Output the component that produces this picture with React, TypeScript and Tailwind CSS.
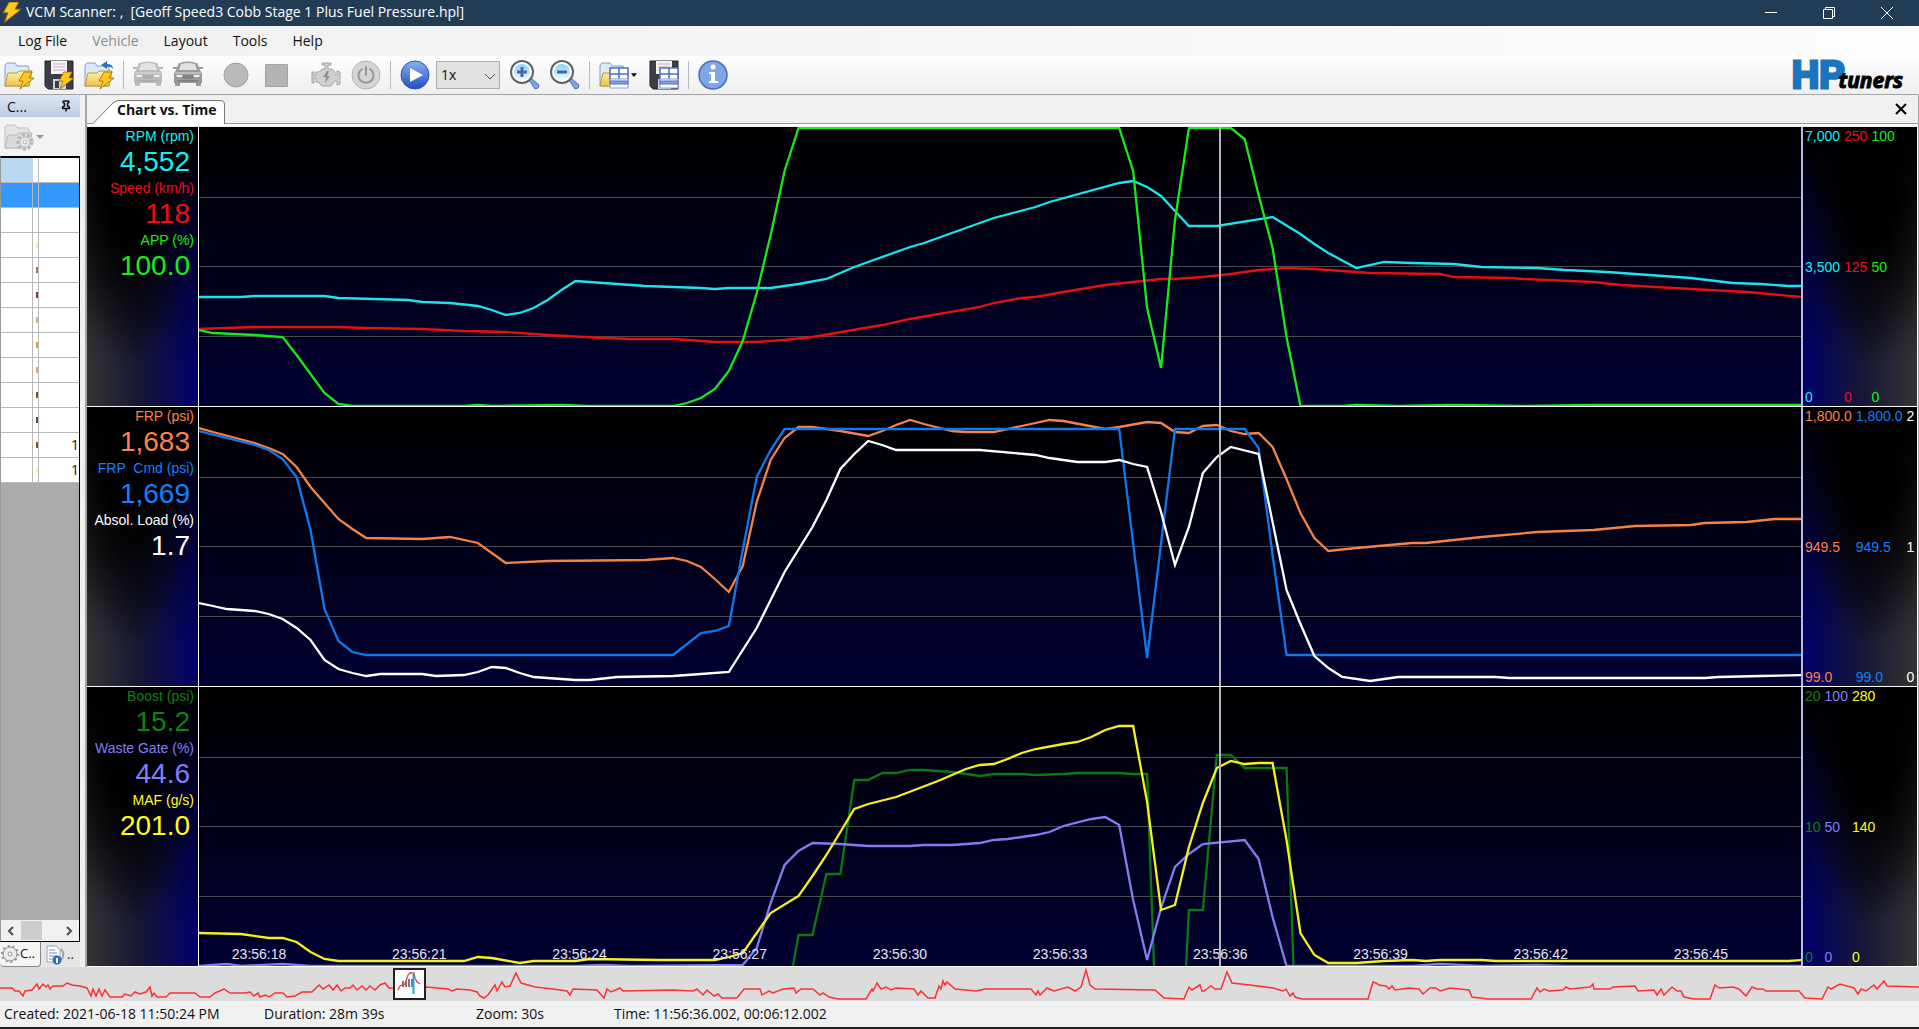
import React from "react";
import { Pin } from "lucide-react";

type Point = [number, number];

type Channel = {
  name: string;
  value: string;
  text: string;
  stroke: string;
  scale: string[];
  lines: Point[][];
};

// Width of a plot, in samples, and height of a plot
const SAMPLES = 115;
const PLOT_HEIGHT = 279;
const CURSOR = 73.2;

function toPoints(line: Point[]) {
  return line.map(([x, y]) => `${x * 10},${y}`).join(" ");
}

function Bolt({ x = 0, y = 0, size = 1 }: { x?: number; y?: number; size?: number }) {
  return (
    <path
      d="M6 0h8l-3 6h5L2 17l3-8H1z"
      transform={`translate(${x} ${y}) scale(${size})`}
      fill="#ffc81e"
      stroke="#9a6a10"
      strokeWidth="0.8"
      strokeLinejoin="round"
    />
  );
}

function FolderShape({ gray = false }: { gray?: boolean }) {
  return (
    <>
      <path
        d="M1 26V5l2-2h8l2 3h11l1 2v18z"
        fill={gray ? "#e4e4e4" : "#d9ebf7"}
        stroke={gray ? "#bdbdbd" : "#7aa5c9"}
      />
      <path
        d="M1 26l3-13h9l2-2h13l-3 15z"
        fill={gray ? "#dadada" : "url(#folder)"}
        stroke={gray ? "#b9b9b9" : "#c9962c"}
      />
    </>
  );
}

function FloppyShape() {
  return (
    <>
      <path d="M1 1h28v28H4l-3-3z" fill="#3d3d46" stroke="#26262c" />
      <path d="M7 1h16v13H7z" fill="#f6f2f3" />
      <path d="M9 4h12M9 7h12M9 10h12" stroke="#c9b3b8" />
      <path d="M9 19h13v10H9z" fill="#cfd2d8" />
      <path d="M11 21h4v7h-4z" fill="#3d3d46" />
    </>
  );
}

function TableShape() {
  return (
    <>
      <path d="M11 8h18v12H11z" fill="#fff" stroke="#4a6fc0" strokeWidth="1.5" />
      <path d="M11 14h18M20 8v12" stroke="#4a6fc0" strokeWidth="1.5" />
      <path d="M11 19h18v9H11z" fill="#fff" stroke="#8aa0c8" />
      <path d="M11 21h18v3H11z" fill="#7fa6ee" stroke="#4a6fc0" />
    </>
  );
}

function Car({ dark = false }: { dark?: boolean }) {
  const color = dark ? "#9a9a9a" : "#bcbcbc";
  return (
    <svg viewBox="0 0 30 30" className="size-[30px]">
      <path
        d="M6 3q9-3 18 0l3 7 2 3v10h-1v3h-5v-3H7v3H2v-3H1V13l2-3z"
        fill={color}
      />
      <path d="M8 4q7-2 14 0l2 6H6z" fill="#e2e2e2" />
      <path d="M0 8h4M26 8h4" stroke={color} strokeWidth="2" />
      <path d="M2 13h26" stroke="#dedede" />
      <path d="M3 15h6v2H4zM27 15h-6v2h5z" fill="#f1f1f1" />
      <path d="M10 16h10M10 18h10M4 21h22" stroke={dark ? "#6a6a6a" : "#a0a0a0"} />
    </svg>
  );
}

function Magnifier({ plus = false }: { plus?: boolean }) {
  return (
    <svg viewBox="0 0 30 30" className="size-[30px]">
      <path d="M19 20l2-2 8 7q0 4-4 4z" fill="#7ea7ea" stroke="#4e70b4" />
      <circle cx="12" cy="12" r="11" fill="#fff" stroke="#5f6266" strokeWidth="2" />
      <circle cx="12" cy="12" r="8" fill="url(#lens)" />
      <path
        d={plus ? "M7 12h10M12 7v10" : "M7 12h10"}
        stroke="#4468b0"
        strokeWidth="3"
      />
    </svg>
  );
}

function Gear({ className }: { className: string }) {
  return (
    <svg viewBox="0 0 20 20" className={className}>
      <circle cx="10" cy="10" r="7" fill="#ececec" stroke="#8f8f8f" />
      <circle
        cx="10"
        cy="10"
        r="8"
        fill="none"
        stroke="#8f8f8f"
        strokeWidth="2"
        strokeDasharray="2 3"
      />
      <circle cx="10" cy="10" r="2" fill="#fff" stroke="#8f8f8f" />
    </svg>
  );
}

function ToolButton({
  label,
  className = "",
  children,
}: {
  label: string;
  className?: string;
  children: React.ReactNode;
}) {
  return (
    <button type="button" aria-label={label} className={`flex shrink-0 items-center ${className}`}>
      {children}
    </button>
  );
}

function Separator() {
  return <div className="-mx-px h-7 w-px shrink-0 bg-[#b9b9b9]" />;
}

function TitleBar() {
  return (
    <header className="flex h-[26px] shrink-0 items-center bg-[#233c56] pr-[3px] text-white">
      <svg viewBox="0 0 22 22" className="ml-px size-[22px]">
        <Bolt x={1} y={0} size={1.2} />
      </svg>
      <h1 className="ml-[3px] flex-1 whitespace-pre pb-0.5 text-[14px] leading-6">
        VCM Scanner: ,  [Geoff Speed3 Cobb Stage 1 Plus Fuel Pressure.hpl]
      </h1>
      <button type="button" aria-label="Minimize" className="flex w-[58px] justify-center">
        <svg viewBox="0 0 12 12" className="size-3" fill="none" stroke="currentColor">
          <path d="M0 5.5h12" />
        </svg>
      </button>
      <button type="button" aria-label="Restore" className="flex w-[58px] justify-center">
        <svg viewBox="0 0 12 12" className="size-3" fill="none" stroke="currentColor">
          <path d="M.5 2.5h9v9h-9zM2.500 2.500v-2h9v9h-2" />
        </svg>
      </button>
      <button type="button" aria-label="Close" className="flex w-[58px] justify-center">
        <svg viewBox="0 0 12 12" className="size-3" fill="none" stroke="currentColor">
          <path d="M0 0l12 12M12 0L0 12" />
        </svg>
      </button>
    </header>
  );
}

function MenuBar() {
  return (
    <nav className="flex h-[30px] shrink-0 items-center gap-[25px] bg-linear-to-r from-[#f0f0f0] to-[#fdfdfd] px-[18px] pb-0.5 text-[14px]">
      <button type="button">Log File</button>
      <button type="button" disabled className="text-[#8d8d8d]">
        Vehicle
      </button>
      <button type="button">Layout</button>
      <button type="button">Tools</button>
      <button type="button">Help</button>
    </nav>
  );
}

function Toolbar() {
  return (
    <div className="flex h-[39px] shrink-0 items-center gap-[10px] border-b border-[#a5a5a5] bg-linear-to-b from-[#fdfdfd] to-[#efefef] pl-1 pr-4">
      <ToolButton label="Open log file">
        <svg viewBox="0 0 30 30" className="size-[30px]">
          <defs>
            <linearGradient id="folder" x1="0" y1="0" x2="0" y2="1">
              <stop offset="0" stopColor="#fff0ae" />
              <stop offset="1" stopColor="#f2c14b" />
            </linearGradient>
            <linearGradient id="lens" x1="0" y1="0" x2="0" y2="1">
              <stop offset="0" stopColor="#8ad3f3" />
              <stop offset="1" stopColor="#f2fbff" />
            </linearGradient>
            <linearGradient id="play" x1="0" y1="0" x2="0" y2="1">
              <stop offset="0" stopColor="#8ab0f0" />
              <stop offset="1" stopColor="#1e50c0" />
            </linearGradient>
          </defs>
          <FolderShape />
          <Bolt x={14} y={12} />
        </svg>
      </ToolButton>
      <ToolButton label="Save log file">
        <svg viewBox="0 0 30 30" className="size-[30px]">
          <FloppyShape />
          <Bolt x={14} y={12} />
        </svg>
      </ToolButton>
      <ToolButton label="Reopen log file">
        <svg viewBox="0 0 30 30" className="size-[30px]">
          <FolderShape />
          <path d="M29 9q0-5-6-5V1l-6 4 6 4V7q4-1 6 2z" fill="#2b73b5" />
          <Bolt x={14} y={12} />
        </svg>
      </ToolButton>
      <Separator />
      <ToolButton label="Connect vehicle">
        <Car />
      </ToolButton>
      <ToolButton label="Disconnect vehicle">
        <Car dark />
      </ToolButton>
      <ToolButton label="Record" className="ml-2">
        <svg viewBox="0 0 30 30" className="size-[30px]">
          <circle cx="15" cy="15" r="12" fill="#b9b9b9" stroke="#9f9f9f" />
        </svg>
      </ToolButton>
      <ToolButton label="Stop">
        <svg viewBox="0 0 30 30" className="size-[30px]">
          <path d="M4.500 4.500h22v22h-22z" fill="#b4b4b4" stroke="#a3a3a3" />
        </svg>
      </ToolButton>
      <ToolButton label="Trouble codes" className="ml-[10px]">
        <svg viewBox="0 0 30 30" className="size-[30px]">
          <path
            d="M11 3h9v2h-3v4h4l3 3v3h2v-4l3 1v12l-3 1v-4h-2l-4 5H11l-4-4H5v-4H3v5H1V12h2v3h2v-3h3l3-3h3V5h-3z"
            fill="#cfcfcf"
            stroke="#a6a6a6"
          />
          <path d="M16 11l-4 6h3l-1 6 5-7h-3l2-5z" fill="#8f8f8f" />
        </svg>
      </ToolButton>
      <ToolButton label="Power">
        <svg viewBox="0 0 30 30" className="size-[30px]" fill="none">
          <circle cx="15" cy="15" r="14" fill="#d5d5d5" stroke="#b4b4b4" />
          <path
            d="M11 9a7.500 7.500 0 1 0 8 0M15 7v8"
            stroke="#969696"
            strokeWidth="2"
            strokeLinecap="round"
          />
        </svg>
      </ToolButton>
      <Separator />
      <ToolButton label="Play">
        <svg viewBox="0 0 30 30" className="size-[30px]">
          <circle cx="15" cy="15" r="14" fill="url(#play)" stroke="#2a55ae" />
          <path d="M10 8l13 7-13 7z" fill="#fff" />
        </svg>
      </ToolButton>
      <div className="relative -ml-1 shrink-0">
        <select
          aria-label="Playback speed"
          className="h-7 w-16 appearance-none border border-[#adadad] bg-[#e1e1e1] px-1 text-[14px] leading-5"
        >
          <option>1x</option>
        </select>
        <svg
          viewBox="0 0 12 7"
          className="pointer-events-none absolute right-1 top-3 h-[7px] w-3"
          fill="none"
          stroke="#555"
        >
          <path d="M1 1l5 5 5-5" />
        </svg>
      </div>
      <ToolButton label="Zoom in">
        <Magnifier plus />
      </ToolButton>
      <ToolButton label="Zoom out">
        <Magnifier />
      </ToolButton>
      <Separator />
      <ToolButton label="Open layout">
        <svg viewBox="0 0 30 30" className="size-[30px]">
          <FolderShape />
          <TableShape />
        </svg>
        <svg viewBox="0 0 8 5" className="ml-0.5 h-1 w-1.5">
          <path d="M0 0h8L4 5z" />
        </svg>
      </ToolButton>
      <ToolButton label="Save layout" className="ml-0.5">
        <svg viewBox="0 0 30 30" className="size-[30px]">
          <FloppyShape />
          <TableShape />
        </svg>
      </ToolButton>
      <Separator />
      <ToolButton label="Information">
        <svg viewBox="0 0 30 30" className="size-[30px]">
          <circle cx="15" cy="15" r="14" fill="#7fa5ea" stroke="#4a6cb3" strokeWidth="1.500" />
          <path d="M11 12h6v9h3v2h-9v-2h2v-7h-2z" fill="#fff" />
          <circle cx="15" cy="7" r="2.500" fill="#fff" />
        </svg>
      </ToolButton>
      <div className="ml-auto flex items-baseline font-bold">
        <span className="font-['Liberation_Sans'] text-[38px] leading-9 text-[#1c75bc] [-webkit-text-stroke:3px_#1c75bc]">
          HP
        </span>
        <span className="relative -ml-1.5 text-[21px] italic leading-6 text-black [-webkit-text-stroke:1px_#000]">
          tuners
        </span>
      </div>
    </div>
  );
}

const rows = [
  { mark: "", value: "", selected: true },
  { mark: "", value: "" },
  { mark: "bg-[#f4f7a8]", value: "" },
  { mark: "bg-[#b07040]", value: "" },
  { mark: "bg-[#7a3550]", value: "" },
  { mark: "bg-[#e0b060]", value: "" },
  { mark: "bg-[#e0a040]", value: "" },
  { mark: "bg-[#e0a860]", value: "" },
  { mark: "bg-[#8a5020]", value: "" },
  { mark: "bg-[#7a3570]", value: "" },
  { mark: "bg-[#8a5020]", value: "1" },
  { mark: "bg-[#f4f7a8]", value: "1" },
];

function Sidebar() {
  return (
    <aside className="flex w-20 shrink-0 flex-col overflow-hidden text-[13px]">
      <div className="flex h-[22px] shrink-0 items-center justify-between bg-linear-to-b from-[#dbe6f2] to-[#bccde0] pl-[7px] pr-2 text-[14px]">
        <span>C...</span>
        <button type="button" aria-label="Pin panel">
          <Pin className="size-3" strokeWidth={3} />
        </button>
      </div>
      <div className="flex h-[39px] shrink-0 items-center bg-[#f3f3f3] pl-1">
        <button type="button" aria-label="Channel options" className="flex items-center gap-0.5">
          <svg viewBox="0 0 30 30" className="size-[30px]">
            <FolderShape gray />
            <circle cx="21" cy="20" r="7" fill="#e6e6e6" stroke="#b5b5b5" strokeWidth="3" strokeDasharray="3 2" />
            <circle cx="21" cy="20" r="5" fill="#ededed" stroke="#b5b5b5" />
            <circle cx="21" cy="20" r="2" fill="#f8f8f8" stroke="#b5b5b5" />
          </svg>
          <svg viewBox="0 0 8 4" className="h-1 w-2" fill="#999">
            <path d="M0 0h8L4 4z" />
          </svg>
        </button>
      </div>
      <div className="flex min-h-0 flex-1 flex-col border border-t-2 border-black border-l-[#999] bg-[#ababab]">
        <table className="w-full table-fixed border-separate border-spacing-0 bg-white">
          <colgroup>
            <col className="w-8" />
            <col className="w-[6px]" />
            <col />
          </colgroup>
          <thead>
            <tr className="h-[25px]">
              <th className="border-b border-[#b9b9b9] bg-[#b9d9f2]" />
              <th className="border-b border-r border-[#b9b9b9]" />
              <th className="border-b border-[#b9b9b9]" />
            </tr>
          </thead>
          <tbody>
            {rows.map((row, i) => (
              <tr key={i} className={`h-[25px] ${row.selected ? "bg-[#3399ff]" : ""}`}>
                <td className="border-b border-r border-[#b9b9b9] p-0" />
                <td className="border-b border-r border-[#b9b9b9] p-0">
                  <div className={`ml-auto h-1.5 w-0.5 ${row.mark}`} />
                </td>
                <td className="border-b border-[#b9b9b9] p-0 text-right text-[14px] leading-5">
                  {row.value}
                </td>
              </tr>
            ))}
          </tbody>
        </table>
        <div className="mt-auto flex h-[21px] items-center bg-[#f0f0f0] px-1.5 text-[#505050]">
          <button type="button" aria-label="Scroll left">
            <svg viewBox="0 0 8 10" className="h-2.5 w-2" fill="none" stroke="currentColor" strokeWidth="2">
              <path d="M6 1L2 5l4 4" />
            </svg>
          </button>
          <div className="ml-1.5 h-[19px] w-[21px] bg-[#cdcdcd]" />
          <button type="button" aria-label="Scroll right" className="ml-auto">
            <svg viewBox="0 0 8 10" className="h-2.5 w-2" fill="none" stroke="currentColor" strokeWidth="2">
              <path d="M2 1l4 4-4 4" />
            </svg>
          </button>
        </div>
      </div>
      <div className="flex h-[25px] shrink-0 bg-[#e6e6e6]">
        <button
          type="button"
          className="flex w-[41px] items-center rounded-b border-b border-r border-[#888] bg-[#f5f5f5]"
        >
          <Gear className="size-5" />
          C..
        </button>
        <button type="button" className="flex items-center gap-0.5 pl-1">
          <svg viewBox="0 0 20 20" className="size-5" fill="none">
            <path d="M2 1h9l4 4v12H2z" fill="#fff" stroke="#9aa7b5" />
            <path d="M4 5h6M4 8h8M4 11h8M4 14h5" stroke="#6f93c4" />
            <path d="M16 4q5 6 0 11" stroke="#8e99a5" strokeWidth="1.500" />
            <circle cx="12" cy="15" r="4.500" fill="#2d6fc8" />
            <path d="M12 13v5" stroke="#fff" strokeWidth="2" />
          </svg>
          ..
        </button>
      </div>
    </aside>
  );
}

function Panel({ channels, times }: { channels: Channel[]; times?: string[] }) {
  return (
    <section className="flex min-h-0 flex-1 border-b border-white">
      <dl className="w-[112px] shrink-0 overflow-hidden border-r border-white bg-[radial-gradient(ellipse_60%_65%_at_40%_20%,#000_30%,transparent),linear-gradient(to_bottom,#000,transparent_85%),linear-gradient(to_right,#343434,#181834_45%,#00006c)] text-right whitespace-pre">
        {channels.map((channel) => (
          <div key={channel.name} className={channel.text}>
            <dt className="pr-1 text-[14px] leading-[18px]">{channel.name}</dt>
            <dd className="pr-2 text-[28px] leading-[34px]">{channel.value}</dd>
          </div>
        ))}
      </dl>
      <div className="relative min-w-0 flex-1 bg-[linear-gradient(to_bottom,#000,#000032)]">
        <svg
          viewBox={`0 0 ${SAMPLES * 10 - 1} ${PLOT_HEIGHT}`}
          preserveAspectRatio="none"
          className="absolute inset-0 size-full"
          fill="none"
        >
          {[70, 139, 209].map((y) => (
            <path key={y} d={`M0 ${y + 0.5}H1150`} stroke="#4a4a4e" vectorEffect="non-scaling-stroke" />
          ))}
          {channels.map((channel) =>
            channel.lines.map((line, i) => (
              <polyline
                key={channel.name + i}
                points={toPoints(line)}
                stroke={channel.stroke}
                strokeWidth="2.3"
                vectorEffect="non-scaling-stroke"
              />
            ))
          )}
        </svg>
        {times?.map((time, i) => (
          <time
            key={time}
            className="absolute bottom-1 -translate-x-1/2 text-[14px] leading-4 text-[#e6e6f0]"
            style={{ left: `${3.75 + i * 10}%` }}
          >
            {time}
          </time>
        ))}
        <div
          className="absolute inset-y-0 w-0.5 bg-[#b4b4bc]"
          style={{ left: `${(CURSOR / SAMPLES) * 100}%` }}
        />
      </div>
      <div className="flex w-[116px] shrink-0 gap-1 overflow-hidden border-l-2 border-[#b9b9e6] bg-[radial-gradient(ellipse_60%_65%_at_60%_20%,#000_30%,transparent),linear-gradient(to_bottom,#000,transparent_85%),linear-gradient(to_left,#343434,#181834_45%,#00006c)] pl-[2px] text-[14px] leading-[18px]">
        {channels.map((channel) => (
          <div key={channel.name} className={`flex flex-col justify-between ${channel.text}`}>
            {channel.scale.map((mark) => (
              <span key={mark}>{mark}</span>
            ))}
          </div>
        ))}
      </div>
    </section>
  );
}

function ChartWindow() {
  return (
    <main className="flex min-w-0 flex-1 flex-col border-l-2 border-r border-[#a5a5a5]">
      <div className="flex h-[29px] shrink-0 items-end justify-between border-b border-[#999]">
        <button
          type="button"
          className="relative ml-[6px] -mb-px h-6 w-[132px] pb-1 pl-6 pr-2 text-left text-[14px] font-bold leading-5"
        >
          <svg
            viewBox="0 0 132 24"
            preserveAspectRatio="none"
            className="absolute inset-0 size-full"
          >
            <path d="M0 23.500L20 3Q23 .5 26 .5H128Q131.500.5 131.500 4V24H0z" fill="#fff" />
            <path d="M0 23.500L20 3Q23 .5 26 .5H128Q131.500.5 131.500 4V24" fill="none" stroke="#777" />
          </svg>
          <span className="relative whitespace-nowrap">Chart vs. Time</span>
        </button>
        <button type="button" aria-label="Close chart" className="mb-2 mr-[11px]">
          <svg viewBox="0 0 12 12" className="size-3" stroke="#000" strokeWidth="2">
            <path d="M1 1l10 10M11 1L1 11" />
          </svg>
        </button>
      </div>
      <div className="flex min-h-0 flex-1 flex-col border-t-2 border-r border-white pt-px font-['Liberation_Sans',Arial,sans-serif]">
        <Panel channels={engine} />
        <Panel channels={fuel} />
        <Panel channels={air} times={times} />
      </div>
    </main>
  );
}

function Overview() {
  return (
    <div className="relative h-[34px] shrink-0 bg-[#dcdcdc]">
      <svg
        viewBox="0 0 1919 34"
        preserveAspectRatio="none"
        className="absolute inset-0 size-full"
        fill="none"
      >
        <polyline points={overview} stroke="#fa3232" strokeWidth="1.500" vectorEffect="non-scaling-stroke" />
      </svg>
      <button
        type="button"
        aria-label="Visible range"
        className="absolute left-[20.5%] top-px h-8 w-[33px] border-2 border-[#222] bg-white"
      >
        <svg viewBox="0 0 29 28" className="size-full" fill="none">
          <path d="M8 17v-6M11 17v-6M14 17V9M17 17V9" stroke="#777" strokeWidth="2" />
          <path d="M3 20l2-4 5-2 3-9 2-2h4l1 5 2 4 3 2" stroke="#f03c3c" strokeWidth="1.300" />
          <path d="M18.500 4v20" stroke="#19a9e6" strokeWidth="2" />
        </svg>
      </button>
    </div>
  );
}

function StatusBar() {
  return (
    <footer className="flex h-[28px] shrink-0 border-b-2 border-[#201f21] bg-[#f0f0f0] pl-1 text-[14px] leading-[26px]">
      <span className="w-[260px]">Created: 2021-06-18 11:50:24 PM</span>
      <span className="w-[212px]">Duration: 28m 39s</span>
      <span className="w-[138px]">Zoom: 30s</span>
      <span>Time: 11:56:36.002, 00:06:12.002</span>
    </footer>
  );
}

export default function App() {
  return (
    <div className="flex h-screen flex-col overflow-hidden bg-[#f0f0f0] font-['Segoe_UI','Open_Sans',sans-serif] text-[#111]">
      <TitleBar />
      <MenuBar />
      <Toolbar />
      <div className="flex min-h-0 flex-1 gap-[5px]">
        <Sidebar />
        <ChartWindow />
      </div>
      <Overview />
      <StatusBar />
    </div>
  );
}

const times = [
  "23:56:18",
  "23:56:21",
  "23:56:24",
  "23:56:27",
  "23:56:30",
  "23:56:33",
  "23:56:36",
  "23:56:39",
  "23:56:42",
  "23:56:45",
];

const engine: Channel[] = [
  {
    name: "RPM (rpm)",
    value: "4,552",
    text: "text-[#14eeee]",
    stroke: "#1ce4ec",
    scale: ["7,000", "3,500", "0"],
    lines: [
      [
        [0, 170], [3, 170], [4, 169], [9, 169], [10, 171], [15, 173], [16, 175], [18, 176], [20, 179],
        [21, 183], [22, 188], [23, 186], [24, 181], [25, 173], [26, 163], [27, 154], [29, 156], [32, 159],
        [36, 161], [37, 162], [38, 161], [41, 161], [42, 159], [43, 157], [45, 152], [47, 140], [51, 120],
        [52, 116], [57, 91], [60, 80], [61, 75], [66, 56], [67, 54], [68, 60], [69, 69], [70, 84], [71, 99],
        [73, 99], [77, 90], [79, 107], [80, 117], [81, 126], [83, 141], [85, 135], [87, 136], [90, 137],
        [92, 140], [96, 141], [98, 143], [101, 145], [104, 148], [107, 151], [110, 156], [112, 157],
        [114, 159], [115, 159],
      ],
    ],
  },
  {
    name: "Speed (km/h)",
    value: "118",
    text: "text-[#f50a14]",
    stroke: "#e60f14",
    scale: ["250", "125", "0"],
    lines: [
      [
        [0, 202], [4, 200], [10, 200], [12, 201], [16, 202], [19, 204], [22, 205], [25, 208], [29, 211],
        [31, 212], [34, 212], [37, 215], [40, 215], [42, 213], [44, 210], [49, 198], [51, 192], [56, 180],
        [57, 176], [59, 171], [60, 170], [62, 165], [65, 158], [67, 155], [69, 152], [70, 152], [72, 150],
        [74, 147], [76, 143], [78, 141], [80, 142], [82, 144], [84, 146], [89, 147], [90, 150], [94, 151],
        [95, 152], [100, 155], [102, 158], [107, 162], [111, 165], [115, 170],
      ],
    ],
  },
  {
    name: "APP (%)",
    value: "100.0",
    text: "text-[#14f014]",
    stroke: "#14eb19",
    scale: ["100", "50", "0"],
    lines: [
      [
        [0, 203], [1, 206], [4, 208], [6, 210], [7, 228], [8, 247], [9, 266], [10, 277], [11, 279],
        [19, 279], [20, 278], [21, 279], [26, 278], [28, 279], [34, 279], [35, 276], [36, 271], [37, 262],
        [38, 244], [39, 214], [40, 166], [41, 108], [42, 44], [43, 1], [66, 1], [67, 44], [68, 181],
        [69, 241], [70, 93], [71, 1], [74, 1], [75, 12], [76, 68], [77, 121], [78, 210], [79, 279],
        [82, 279], [83, 278], [86, 279], [90, 278], [95, 279], [100, 278], [115, 278],
      ],
    ],
  },
];

const fuel: Channel[] = [
  {
    name: "FRP (psi)",
    value: "1,683",
    text: "text-[#ff8246]",
    stroke: "#f58246",
    scale: ["1,800.0", "949.5", "99.0"],
    lines: [
      [
        [0, 21], [1, 25], [4, 36], [5, 41], [6, 47], [7, 60], [8, 80], [10, 112], [11, 122], [12, 131],
        [16, 132], [18, 130], [20, 136], [21, 146], [22, 156], [25, 154], [32, 153], [34, 151], [35, 154],
        [36, 160], [37, 172], [38, 185], [39, 159], [40, 95], [41, 53], [42, 31], [43, 20], [44, 20],
        [46, 24], [48, 29], [49, 24], [50, 18], [51, 13], [52, 17], [54, 24], [55, 25], [57, 25], [59, 19],
        [60, 16], [61, 13], [62, 14], [65, 22], [66, 20], [68, 15], [69, 16], [70, 25], [71, 26], [72, 19],
        [73, 18], [74, 24], [75, 27], [76, 26], [77, 40], [78, 72], [79, 106], [80, 131], [81, 144],
        [83, 141], [87, 136], [88, 136], [92, 130], [96, 125], [100, 123], [103, 119], [107, 118],
        [108, 116], [111, 115], [113, 112], [115, 112],
      ],
    ],
  },
  {
    name: "FRP  Cmd (psi)",
    value: "1,669",
    text: "text-[#0f82fa]",
    stroke: "#0f78eb",
    scale: ["1,800.0", "949.5", "99.0"],
    lines: [
      [
        [0, 24], [4, 38], [5, 43], [6, 52], [7, 70], [8, 123], [9, 202], [10, 234], [11, 245], [12, 248],
        [34, 248], [36, 226], [37, 224], [38, 219], [39, 143], [40, 70], [41, 43], [42, 22], [66, 22],
        [68, 251], [70, 22], [75, 22], [76, 41], [77, 148], [78, 248], [115, 248],
      ],
    ],
  },
  {
    name: "Absol. Load (%)",
    value: "1.7",
    text: "text-white",
    stroke: "#ffffff",
    scale: ["2", "1", "0"],
    lines: [
      [
        [0, 196], [1, 199], [2, 202], [4, 204], [5, 207], [6, 212], [7, 221], [8, 233], [9, 253],
        [10, 262], [11, 266], [12, 269], [13, 267], [16, 267], [17, 269], [19, 268], [20, 265], [21, 260],
        [22, 261], [23, 266], [24, 270], [27, 273], [28, 273], [30, 270], [34, 269], [36, 267], [38, 265],
        [40, 221], [42, 165], [44, 120], [45, 93], [46, 62], [47, 47], [48, 34], [49, 38], [50, 43],
        [56, 43], [60, 48], [61, 51], [63, 55], [65, 55], [66, 53], [67, 57], [68, 60], [69, 105],
        [70, 158], [71, 120], [72, 66], [73, 50], [74, 40], [76, 47], [77, 115], [78, 183], [79, 217],
        [80, 249], [81, 261], [82, 270], [84, 274], [86, 270], [93, 270], [94, 271], [108, 271],
        [109, 270], [112, 269], [115, 268],
      ],
    ],
  },
];

const air: Channel[] = [
  {
    name: "Boost (psi)",
    value: "15.2",
    text: "text-[#0a8214]",
    stroke: "#0a7814",
    scale: ["20", "10", "0"],
    lines: [
      [
        [42.6, 279], [43, 248], [44, 248], [45, 187], [46, 187], [47, 93], [48, 93], [49, 86], [50, 86],
        [51, 83], [52, 83], [54, 85], [55, 87], [56, 89], [57, 87], [59, 87], [60, 88], [62, 87], [63, 86],
        [66, 86], [67, 87], [68, 87], [68.5, 279],
      ],
      [
        [70.8, 279], [71, 223], [72, 223], [73, 68], [74, 68], [75, 81], [78, 81], [78.5, 279],
      ],
    ],
  },
  {
    name: "Waste Gate (%)",
    value: "44.6",
    text: "text-[#827dfa]",
    stroke: "#827df0",
    scale: ["100", "50", "0"],
    lines: [
      [
        [0, 279], [2, 277], [3, 279], [6, 277], [8, 279], [27, 279], [29, 278], [31, 279], [39, 278],
        [40, 261], [41, 216], [42, 178], [43, 164], [44, 156], [46, 157], [48, 159], [51, 159], [52, 158],
        [54, 158], [56, 156], [57, 153], [58, 152], [59, 150], [60, 148], [61, 145], [62, 139], [64, 132],
        [65, 130], [66, 138], [67, 213], [68, 273], [69, 221], [70, 180], [71, 167], [72, 157], [75, 153],
        [76, 172], [77, 230], [78, 279], [87, 279], [89, 277], [92, 279], [96, 278], [98, 279], [115, 279],
      ],
    ],
  },
  {
    name: "MAF (g/s)",
    value: "201.0",
    text: "text-[#ffff14]",
    stroke: "#f5f01e",
    scale: ["280", "140", "0"],
    lines: [
      [
        [0, 246], [3, 247], [5, 251], [6, 251], [7, 255], [8, 265], [9, 272], [10, 274], [19, 274],
        [20, 270], [21, 271], [23, 276], [24, 274], [27, 274], [28, 272], [33, 273], [37, 273], [38, 270],
        [39, 266], [40, 246], [41, 226], [43, 209], [44, 189], [45, 168], [47, 122], [48, 117], [50, 110],
        [53, 94], [55, 82], [56, 78], [57, 77], [58, 72], [59, 66], [60, 62], [62, 57], [63, 55], [64, 50],
        [65, 43], [66, 39], [67, 39], [68, 115], [69, 223], [70, 218], [71, 160], [72, 116], [73, 81],
        [74, 74], [75, 77], [76, 76], [77, 76], [78, 153], [79, 246], [80, 268], [81, 276], [83, 276],
        [85, 274], [87, 273], [88, 274], [89, 273], [92, 273], [93, 274], [114, 274], [115, 273],
      ],
    ],
  },
];

const overview =
  "0,21 12,21 15,24 19,24 23,29 25,24 32,23 37,17 39,22 43,17 46,20 48,18 50,22 53,19 63,19 67,16 72,18 80,19 87,21 91,29 93,22 96,29 99,22 102,29 105,23 110,30 122,30 125,27 131,29 135,25 140,27 146,25 150,20 152,29 154,26 157,30 166,30 170,26 195,26 200,30 210,30 215,26 224,22 230,26 245,26 250,25 254,29 258,26 260,30 265,28 269,30 275,26 283,26 287,30 295,29 302,25 312,25 319,18 323,22 329,18 333,23 337,18 341,24 345,21 350,21 353,18 357,23 362,19 366,23 370,19 375,23 380,18 385,16 389,21 394,21 " +
  "427,20 448,22 452,24 457,22 470,23 477,25 480,29 484,31 488,28 495,18 497,24 502,15 505,20 510,19 516,6 521,16 535,20 553,22 567,24 570,28 573,22 597,23 604,31 607,22 611,25 620,21 623,24 673,23 693,24 697,22 703,28 707,23 714,29 718,27 722,31 737,31 744,22 760,22 762,28 769,24 773,26 783,22 794,21 796,26 801,22 813,22 820,28 823,26 829,30 838,32 866,32 872,22 873,24 877,16 881,22 886,20 891,23 896,21 914,22 918,28 921,24 928,31 935,31 939,19 941,22 943,14 945,18 947,15 955,22 976,24 985,22 1031,22 1036,28 1038,24 1040,28 1047,21 1054,24 1068,20 1075,24 1081,20 1086,3 1090,18 1095,22 1155,23 1164,31 1184,32 1189,20 1192,23 1200,18 " +
  "1202,24 1204,24 1211,19 1215,22 1221,22 1227,5 1232,16 1250,18 1273,21 1283,24 1286,22 1290,29 1293,26 1295,30 1302,32 1368,32 1373,15 1376,16 1379,18 1386,19 1389,22 1392,19 1395,23 1409,21 1419,22 1423,27 1430,21 1436,21 1440,24 1450,21 1469,23 1472,30 1488,32 1531,32 1537,21 1540,25 1544,22 1549,24 1563,23 1566,20 1570,22 1590,20 1593,17 1594,22 1610,22 1613,20 1635,19 1638,24 1654,23 1657,28 1661,22 1664,28 1672,20 1677,24 1681,24 1684,30 1694,32 1710,32 1715,18 1719,21 1733,20 1739,22 1746,29 1752,20 1757,22 1763,22 1766,24 1785,24 1799,24 1805,31 1822,32 1828,20 1831,22 1840,17 1854,21 1858,27 1861,22 1866,24 1874,18 1877,22 1884,14 1887,19 1919,20";
